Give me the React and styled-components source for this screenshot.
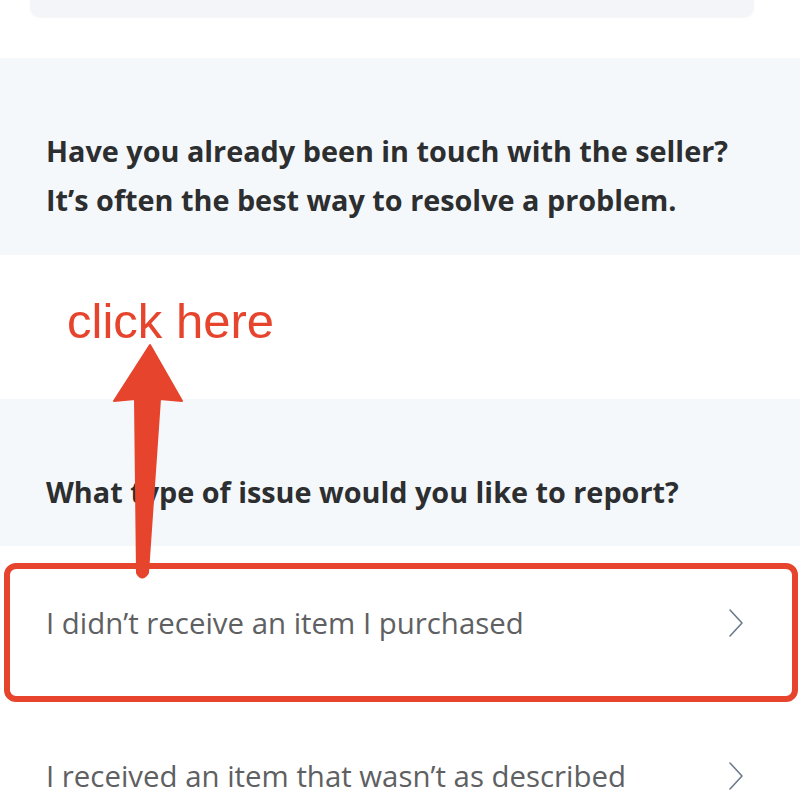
import React from "react";
import styled, { createGlobalStyle } from "styled-components";

const Global = createGlobalStyle`
  html, body { margin: 0; padding: 0; background: #ffffff; }
  body { font-family: "Open Sans", Lato, sans-serif; }
`;

const Page = styled.div`
  position: relative;
  width: 800px;
  height: 800px;
  overflow: hidden;
  background: #ffffff;
  display: flex;
  flex-direction: column;
`;

const TopCardWrap = styled.div`
  flex-shrink: 0;
  padding: 0 46px 0 30px;
`;

const TopCard = styled.div`
  height: 17px;
  background: #f4f5f9;
  border-radius: 0 0 10px 10px;
  box-shadow: 0 1px 2px rgba(0, 0, 0, 0.04);
`;

const Section = styled.section`
  flex-shrink: 0;
  margin-top: ${(p) => p.$top}px;
  height: ${(p) => p.$height}px;
  background: #f5f8fb;
  box-sizing: border-box;
  padding: ${(p) => p.$pad}px 46px 0 46px;
`;

const Heading = styled.h2`
  margin: 0;
  font-family: "Open Sans", Lato, sans-serif;
  font-weight: 700;
  font-size: 28.8px;
  line-height: 49px;
  color: #2c2e2f;
  white-space: nowrap;
`;

const List = styled.div`
  flex-shrink: 0;
  display: flex;
  flex-direction: column;
`;

const Row = styled.div`
  height: 153px;
  display: flex;
  align-items: center;
  justify-content: space-between;
  padding: 0 56px 0 46px;
  box-sizing: border-box;
`;

const RowText = styled.span`
  font-family: "Open Sans", Lato, sans-serif;
  font-size: 29.4px;
  color: #5e6062;
  white-space: nowrap;
`;

const Chevron = () => (
  <svg width="16" height="30" viewBox="0 0 16 30" fill="none">
    <path d="M2 2 L14 15 L2 28" stroke="#6b7a8c" strokeWidth="1.6" strokeLinecap="round" strokeLinejoin="round" />
  </svg>
);

const Highlight = styled.div`
  position: absolute;
  left: 4px;
  top: 563px;
  width: 794px;
  height: 139px;
  box-sizing: border-box;
  border: 6px solid #e6442c;
  border-radius: 12px;
  pointer-events: none;
`;

const Callout = styled.div`
  position: absolute;
  left: 67px;
  top: 297px;
  font-family: "Liberation Sans", Arial, sans-serif;
  font-size: 49px;
  color: #e6442c;
  line-height: 1;
  white-space: nowrap;
`;

const ArrowSvg = styled.svg`
  position: absolute;
  left: 0;
  top: 0;
  pointer-events: none;
`;

export default function App() {
  return (
    <>
      <Global />
      <Page>
        <TopCardWrap>
          <TopCard />
        </TopCardWrap>
        <Section $top={41} $height={197} $pad={68}>
          <Heading>
            Have you already been in touch with the seller?
            <br />
            It’s often the best way to resolve a problem.
          </Heading>
        </Section>
        <Section $top={144} $height={147} $pad={68}>
          <Heading>What type of issue would you like to report?</Heading>
        </Section>
        <List>
          <Row>
            <RowText>I didn’t receive an item I purchased</RowText>
            <Chevron />
          </Row>
          <Row>
            <RowText>I received an item that wasn’t as described</RowText>
            <Chevron />
          </Row>
        </List>
        <Highlight />
        <Callout>click here</Callout>
        <ArrowSvg width="800" height="800" viewBox="0 0 800 800">
          <path
            d="M150 345 L182 401 L160 399 L148 573 Q142 582 137 573 L135 399 L114 401 Z"
            fill="#e6442c"
            stroke="#e6442c"
            strokeWidth="2"
            strokeLinejoin="round"
          />
        </ArrowSvg>
      </Page>
    </>
  );
}
